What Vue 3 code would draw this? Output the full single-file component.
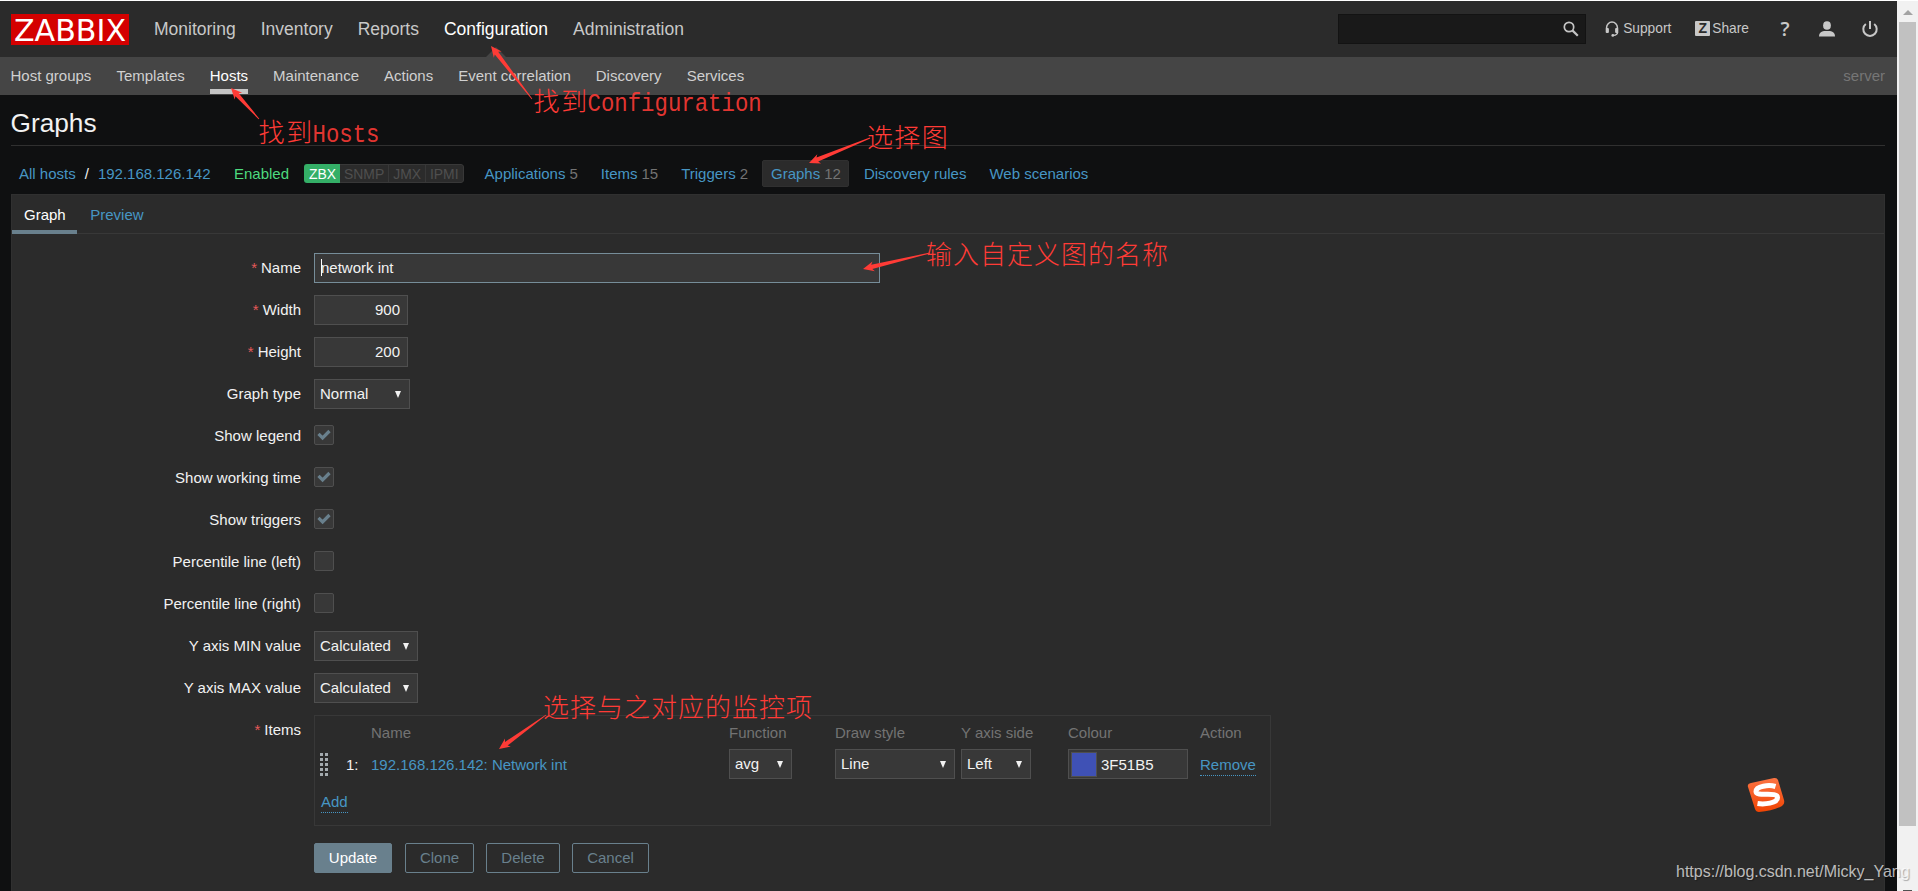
<script setup>
import { computed, ref } from 'vue'

const mainMenu = ['Monitoring', 'Inventory', 'Reports', 'Configuration', 'Administration']
const subMenu = ['Host groups', 'Templates', 'Hosts', 'Maintenance', 'Actions', 'Event correlation', 'Discovery', 'Services']

const interfaces = ['ZBX', 'SNMP', 'JMX', 'IPMI']

const hostLinks = [
    { label: 'Applications', count: 5 },
    { label: 'Items', count: 15 },
    { label: 'Triggers', count: 2 },
    { label: 'Graphs', count: 12 },
    { label: 'Discovery rules' },
    { label: 'Web scenarios' }
]

const tab = ref('Graph')
const name = ref('network int')
const width = ref('900')
const height = ref('200')
const colour = ref('3F51B5')

const checks = ref([
    { label: 'Show legend', checked: true },
    { label: 'Show working time', checked: true },
    { label: 'Show triggers', checked: true },
    { label: 'Percentile line (left)', checked: false },
    { label: 'Percentile line (right)', checked: false }
])

const notes = [
    { from: [259, 119], to: [231, 88], x: 258.5, y: 142, cjk: '找到', latin: 'Hosts' },
    { from: [532, 99], to: [491, 46], x: 533.5, y: 110.5, cjk: '找到', latin: 'Configuration' },
    { from: [870, 138], to: [809, 163], x: 867, y: 147, cjk: '选择图' },
    { from: [930, 253], to: [863, 269], x: 926, y: 264, cjk: '输入自定义图的名称' },
    { from: [546, 715], to: [499, 749], x: 543, y: 717, cjk: '选择与之对应的监控项' }
]

// tapered shaft with a small head at the "to" end
const arrows = computed(() => notes.map(({ from, to }) => {
    const dx = to[0] - from[0]
    const dy = to[1] - from[1]
    const len = Math.hypot(dx, dy)
    const ux = dx / len
    const uy = dy / len
    const at = (back, side) => `${(to[0] - ux * back - uy * side).toFixed(1)},${(to[1] - uy * back + ux * side).toFixed(1)}`
    return [at(0, 0), at(11, 5), at(9, 2.2), at(len, 0.4), at(len, -0.4), at(9, -2.2), at(11, -5)].join(' ')
}))
</script>

<template>
    <div class="screen">
        <div class="page">
            <header class="top">
                <span class="logo">
                    <svg width="118" height="31"><text x="3" y="26.5" textLength="112" lengthAdjust="spacingAndGlyphs">ZABBIX</text></svg>
                </span>
                <nav class="main-menu">
                    <a v-for="item in mainMenu" :key="item" :class="{ active: item === 'Configuration' }">{{ item }}</a>
                </nav>
                <div class="search">
                    <svg width="18" height="18" viewBox="0 0 18 18">
                        <circle cx="7" cy="7" r="4.7" fill="none" stroke="#c4c4c4" stroke-width="1.7" />
                        <path d="M10.4 10.4L15.8 15.8" stroke="#c4c4c4" stroke-width="2.2" />
                    </svg>
                </div>
                <a class="user-link support">
                    <svg width="14" height="16" viewBox="0 0 14 16">
                        <path d="M1.6 8V6.5a5.4 5.4 0 0 1 10.8 0V8" fill="none" stroke="#c8c8c8" stroke-width="1.5" />
                        <rect x="0.7" y="7" width="3.2" height="5" rx="1" fill="#c8c8c8" />
                        <rect x="10.1" y="7" width="3.2" height="5" rx="1" fill="#c8c8c8" />
                        <path d="M12.6 11c0 2.2-1.5 3.2-4.2 3.4" fill="none" stroke="#c8c8c8" stroke-width="1.3" />
                        <circle cx="7.8" cy="14.4" r="1.4" fill="#c8c8c8" />
                    </svg>
                    Support
                </a>
                <a class="user-link share"><b>Z</b>Share</a>
                <a class="icon help">?</a>
                <a class="icon">
                    <svg width="16" height="16" viewBox="0 0 16 16">
                        <ellipse cx="8" cy="4.5" rx="3.9" ry="4.3" fill="#c8c8c8" />
                        <path d="M0 15.5c0-3.8 2.5-5 5-5.500h6c2.500 0.500 5 1.700 5 5.500z" fill="#c8c8c8" />
                    </svg>
                </a>
                <a class="icon">
                    <svg width="16" height="16" viewBox="0 0 16 16">
                        <path d="M3.8 3a6.7 6.7 0 1 0 8.400 0M8 0v8" fill="none" stroke="#c8c8c8" stroke-width="2" />
                    </svg>
                </a>
            </header>

            <nav class="sub-menu">
                <a v-for="item in subMenu" :key="item" :class="{ active: item === 'Hosts' }">{{ item }}</a>
                <span class="server">server</span>
            </nav>

            <main>
                <h1>Graphs</h1>

                <div class="host-bar">
                    <a>All hosts</a><span class="slash">/</span><a>192.168.126.142</a>
                    <span class="enabled">Enabled</span>
                    <span class="interfaces">
                        <span v-for="i in interfaces" :key="i" :class="{ on: i === 'ZBX' }">{{ i }}</span>
                    </span>
                    <span v-for="link in hostLinks" :key="link.label" class="host-link" :class="{ selected: link.label === 'Graphs' }">
                        <a>{{ link.label }}</a><sup v-if="link.count">{{ link.count }}</sup>
                    </span>
                </div>

                <div class="panel">
                    <div class="tabs">
                        <a v-for="t in ['Graph', 'Preview']" :key="t" :class="{ active: tab === t }" @click="tab = t">{{ t }}</a>
                    </div>

                    <div class="form">
                        <div class="row">
                            <label class="required" for="name">Name</label>
                            <div class="name-field">
                                <input id="name" v-model="name">
                                <i class="caret"></i>
                            </div>
                        </div>
                        <div class="row">
                            <label class="required" for="width">Width</label>
                            <input id="width" v-model="width" class="num">
                        </div>
                        <div class="row">
                            <label class="required" for="height">Height</label>
                            <input id="height" v-model="height" class="num">
                        </div>
                        <div class="row">
                            <label>Graph type</label>
                            <div class="select normal">Normal</div>
                        </div>
                        <div v-for="c in checks" :key="c.label" class="row">
                            <label>{{ c.label }}</label>
                            <span class="checkbox" @click="c.checked = !c.checked">
                                <svg v-if="c.checked" width="14" height="12" viewBox="0 0 14 12">
                                    <path d="M1.5 4.8L5.6 8.9L12.5 2" fill="none" stroke="#69808d" stroke-width="3.2" />
                                </svg>
                            </span>
                        </div>
                        <div class="row">
                            <label>Y axis MIN value</label>
                            <div class="select calculated">Calculated</div>
                        </div>
                        <div class="row">
                            <label>Y axis MAX value</label>
                            <div class="select calculated">Calculated</div>
                        </div>
                        <div class="row items-row">
                            <label class="required">Items</label>
                            <div class="items">
                                <div class="items-grid head">
                                    <span></span><span></span>
                                    <span>Name</span><span>Function</span><span>Draw style</span>
                                    <span>Y axis side</span><span>Colour</span><span>Action</span>
                                </div>
                                <div class="items-grid">
                                    <span class="drag"><i v-for="n in 10" :key="n"></i></span>
                                    <span>1:</span>
                                    <a>192.168.126.142: Network int</a>
                                    <div class="select avg">avg</div>
                                    <div class="select line">Line</div>
                                    <div class="select left">Left</div>
                                    <div class="colour"><i></i><input v-model="colour"></div>
                                    <span><a class="dotted">Remove</a></span>
                                </div>
                                <a class="dotted add">Add</a>
                            </div>
                        </div>
                        <div class="buttons">
                            <button class="primary">Update</button>
                            <button class="clone">Clone</button>
                            <button class="delete">Delete</button>
                            <button class="cancel">Cancel</button>
                        </div>
                    </div>
                </div>
            </main>
        </div>

        <div class="scrollbar">
            <i class="up"></i>
            <i class="thumb"></i>
            <i class="down"></i>
        </div>

        <svg class="notes" width="1918" height="891">
            <g v-for="(n, i) in notes" :key="i">
                <polygon :points="arrows[i]" />
                <text class="cjk" :x="n.x" :y="n.y" :textLength="n.cjk.length * 26.9">{{ n.cjk }}</text>
                <text v-if="n.latin" class="latin" :x="n.x + 54" :y="n.y" :textLength="n.latin.length * 13.4" lengthAdjust="spacingAndGlyphs">{{ n.latin }}</text>
            </g>
        </svg>

        <svg class="ime" width="38" height="36" viewBox="0 0 38 36">
            <defs>
                <linearGradient id="ime-fill" x1="0" y1="0" x2="0" y2="1">
                    <stop offset="0" stop-color="#fb7443" />
                    <stop offset="1" stop-color="#f04403" />
                </linearGradient>
            </defs>
            <path d="M4 6L27 1Q30 0.5 31 3L37 23Q38 27 35 29Q26 34 12 35Q9 35 8 32L1 10Q0 7 4 6Z" fill="url(#ime-fill)" />
            <path d="M28.5 9.5C22 7.5 9 9 9 14.5C9 20.5 30.5 14 30.5 20.5C30.5 26.5 17 27.5 10.5 26.5" fill="none" stroke="#fff" stroke-width="5" />
        </svg>

        <span class="watermark">https://blog.csdn.net/Micky_Yang</span>
    </div>
</template>

<style>
body {
    overflow: hidden;
    background: #0f1011;
}
</style>

<style scoped>
.screen {
    position: relative;
    display: flex;
    width: 1918px;
    height: 891px;
    overflow: hidden;
    box-sizing: border-box;
    border-top: 1px solid #fff;
    font-family: "Liberation Sans", Arial, sans-serif;
    font-size: 15px;
    color: #f2f2f2;
    background: #0f1011;
}

* {
    box-sizing: border-box;
}

.page {
    width: 1897px;
}

a {
    color: #4796c4;
    cursor: pointer;
}

.top {
    display: flex;
    align-items: center;
    height: 56px;
    padding: 0 19px 0 11px;
    background: #2b2b2b;
}

.logo {
    width: 118px;
    height: 31px;
    margin-top: 1px;
    background: #d40000;
}

.logo svg {
    display: block;
    overflow: visible;
    fill: #fff;
    font-family: "DejaVu Sans", sans-serif;
    font-size: 30px;
}

.main-menu {
    display: flex;
    gap: 25px;
    margin-left: 25px;
    font-size: 17.5px;
}

.main-menu a {
    position: relative;
    line-height: 56px;
    color: #c8c8c8;
}

.main-menu .active {
    color: #fff;
}

.main-menu .active::after {
    content: "";
    position: absolute;
    left: 50%;
    bottom: 0;
    margin-left: -10px;
    border: 10px solid transparent;
    border-top: 0;
    border-bottom-color: #454545;
}

.search {
    display: flex;
    align-items: center;
    justify-content: flex-end;
    width: 248px;
    height: 30px;
    margin-left: auto;
    padding-right: 5px;
    background: #191919;
    border: 1px solid #131313;
}

.user-link {
    display: flex;
    align-items: center;
    margin-top: -1px;
    font-size: 13.75px;
    color: #c8c8c8;
}

.support {
    gap: 4px;
    margin-left: 19px;
}

.share {
    gap: 2px;
    margin-right: 31px;
    margin-left: 24px;
}

.share b {
    width: 15px;
    height: 15px;
    border-radius: 1px;
    background: #c8c8c8;
    color: #2b2b2b;
    font-size: 14px;
    line-height: 15px;
    text-align: center;
}

.icon {
    display: flex;
    width: 16px;
    margin-left: 27px;
}

.help {
    justify-content: center;
    width: 10px;
    margin: -2px 2px 0 0;
    color: #c8c8c8;
    font-family: "Open Sans", sans-serif;
    font-size: 20px;
    font-weight: 600;
}

.sub-menu {
    display: flex;
    gap: 25px;
    height: 38px;
    padding: 0 12px 0 10.5px;
    background: #454545;
    line-height: 37px;
}

.sub-menu a {
    height: 37px;
    color: #d0d0d0;
}

.sub-menu .active {
    color: #fff;
    border-bottom: 5px solid #c4c4c4;
}

.server {
    margin-left: auto;
    color: #767676;
}

main {
    padding: 0 12px 0 11px;
}

h1 {
    height: 51px;
    margin: 0;
    border-bottom: 1px solid #303030;
    font-size: 26.25px;
    font-weight: 400;
    line-height: 56px;
    text-indent: -0.5px;
}

.host-bar {
    display: flex;
    align-items: center;
    height: 48px;
    padding: 7px 0 0 8px;
    line-height: 17px;
}

.slash {
    margin: 0 9px;
}

.enabled {
    margin-left: 23.5px;
    color: #4ddb7f;
}

.interfaces {
    display: flex;
    height: 19px;
    margin: 0 12.5px 0 15px;
    border-radius: 3px;
    overflow: hidden;
    font-size: 13.9px;
    line-height: 19px;
}

.interfaces span {
    padding: 1px 4px 0;
    border: 1px solid #383838;
    border-left: 0;
    background: #2b2b2b;
    color: #4f4f4f;
    line-height: 17px;
}

.interfaces span:last-child {
    border-radius: 0 3px 3px 0;
}

.interfaces .on {
    padding: 1px 4px 0 5px;
    border: 0;
    background: #34af67;
    color: #fff;
    line-height: 19px;
}

.host-link {
    height: 27px;
    margin-right: 6px;
    padding: 0 7.5px;
    border: 1px solid transparent;
    border-radius: 2px;
    line-height: 25px;
}

.host-link.selected {
    background: #2b2b2b;
    border-color: #303030;
}

sup {
    margin-left: 4px;
    color: #737373;
    font-size: 15px;
    vertical-align: baseline;
    line-height: 1;
}

.panel {
    height: 720px;
    border: 1px solid #303030;
    background: #2b2b2b;
}

.tabs {
    display: flex;
    gap: 1px;
    height: 39px;
    border-bottom: 1px solid #383838;
    line-height: 40px;
}

.tabs a {
    height: 39px;
    padding: 0 11.5px 0 12px;
}

.tabs .active {
    color: #fff;
    border-bottom: 4px solid #69808d;
}

.form {
    display: flex;
    flex-direction: column;
    gap: 12px;
    padding-top: 19px;
}

.row {
    display: flex;
    align-items: center;
    gap: 13px;
    height: 30px;
}

.row label {
    width: 289px;
    text-align: right;
    line-height: 30px;
}

.required::before {
    content: "*";
    margin-right: 4px;
    color: #e45959;
}

input {
    height: 30px;
    padding: 0 7px 2px;
    border: 1px solid #4f4f4f;
    outline: none;
    background: #383838;
    color: #f2f2f2;
    font: inherit;
}

.name-field {
    position: relative;
}

#name {
    display: block;
    width: 566px;
    border-color: #768d99;
    padding: 0 6px 2px;
}

.caret {
    position: absolute;
    left: 7px;
    top: 6px;
    width: 1px;
    height: 17px;
    background: #fff;
}

.num {
    width: 94px;
    text-align: right;
}

.select {
    display: flex;
    align-items: center;
    justify-content: space-between;
    height: 30px;
    padding: 0 8px 2px 5px;
    border: 1px solid #4f4f4f;
    background: #383838;
}

.select::after {
    content: "";
    margin-top: 2px;
    border: 3.5px solid transparent;
    border-top: 7px solid #f2f2f2;
    border-bottom: 0;
}

.normal {
    width: 96px;
}

.calculated {
    width: 104px;
}

.avg {
    width: 63px;
}

.line {
    width: 120px;
}

.left {
    width: 70px;
}

.checkbox {
    display: flex;
    align-items: center;
    justify-content: center;
    width: 20px;
    height: 20px;
    margin-top: -2px;
    border: 1px solid #4f4f4f;
    border-radius: 2px;
    background: #383838;
}

.items-row {
    height: 111px;
    align-items: flex-start;
}

.items {
    width: 957px;
    height: 111px;
    padding: 5px 6px;
    border: 1px solid #383838;
}

.items-grid {
    display: grid;
    grid-template-columns: 25px 25px 358px 106px 126px 107px 132px 60px;
    align-items: center;
    height: 30px;
}

.head {
    height: 22px;
    margin-bottom: 6px;
    color: #737373;
}

.drag {
    display: grid;
    grid-template-columns: 3px 3px;
    gap: 2px;
    margin-left: -1px;
}

.drag i {
    width: 3px;
    height: 3px;
    background: #a4abaf;
}

.colour {
    display: flex;
    align-items: center;
    width: 120px;
    height: 30px;
    padding-left: 2px;
    border: 1px solid #4f4f4f;
    background: #383838;
}

.colour i {
    width: 26px;
    height: 25px;
    border: 1px solid #4f4f4f;
    background: #3f51b5;
}

.colour input {
    width: 80px;
    height: 28px;
    padding: 0 4px;
    border: 0;
}

.dotted {
    border-bottom: 1px dotted #4796c4;
    padding-bottom: 2px;
}

.add {
    display: inline-block;
    margin-top: 14px;
}

.buttons {
    display: flex;
    margin: 5px 0 0 302px;
}

button {
    height: 30px;
    padding: 0 0 1px;
    border: 1px solid #69808d;
    border-radius: 2px;
    background: transparent;
    color: #69808d;
    font: inherit;
}

.primary {
    width: 78px;
    margin-right: 13px;
    background: #69808d;
    color: #fff;
}

.clone {
    width: 69px;
    margin-right: 12px;
}

.delete {
    width: 74px;
    margin-right: 12px;
}

.cancel {
    width: 77px;
}

.scrollbar {
    display: flex;
    flex-direction: column;
    align-items: center;
    width: 21px;
    background: #f1f1f1;
}

.up {
    margin: 9px 0 7px;
    border: 5px solid transparent;
    border-top: 0;
    border-bottom-color: #a3a3a3;
}

.thumb {
    width: 17px;
    height: 804px;
    background: #c1c1c1;
}

.down {
    width: 9px;
    height: 1px;
    margin-top: auto;
    background: #505050;
}

.notes {
    position: absolute;
    left: 0;
    top: -1px;
    fill: #ff3b36;
    pointer-events: none;
}

.cjk {
    font-family: "Noto Sans CJK SC", sans-serif;
    font-size: 26px;
    font-weight: 300;
}

.latin {
    font-family: "Liberation Mono", monospace;
    font-size: 26px;
    fill-opacity: 0.9;
}

.ime {
    position: absolute;
    left: 1747px;
    top: 776px;
}

.watermark {
    position: absolute;
    left: 1676px;
    top: 861px;
    font-size: 16px;
    line-height: 20px;
    color: rgba(255, 255, 255, 0.7);
    text-shadow: 1px 1px 1px rgba(0, 0, 0, 0.3);
}
</style>
